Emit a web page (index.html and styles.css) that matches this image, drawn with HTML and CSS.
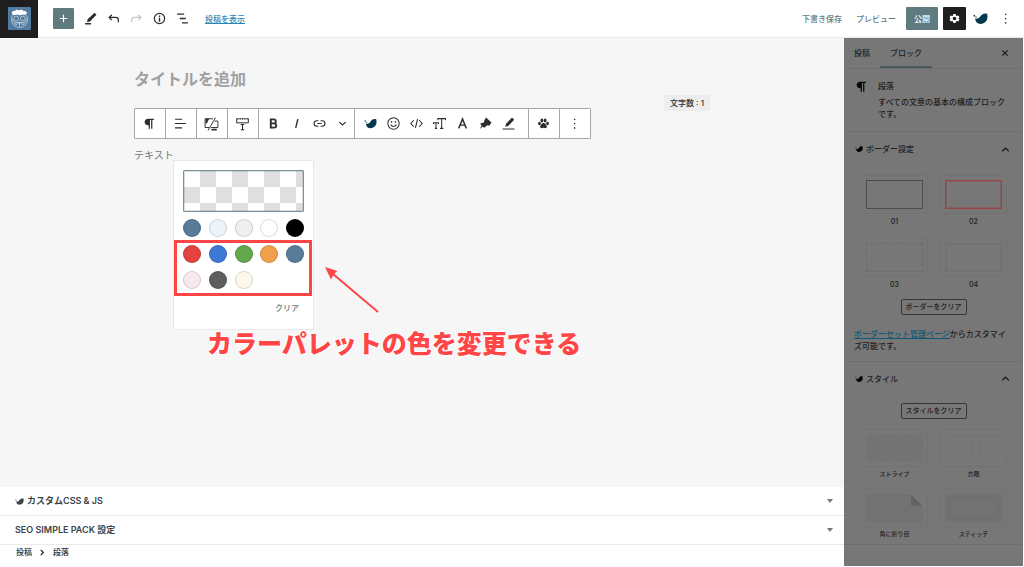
FILE: index.html
```html
<!DOCTYPE html>
<html lang="ja">
<head>
<meta charset="utf-8">
<title>投稿を編集</title>
<link rel="stylesheet" href="styles.css">
</head>
<body>
<svg class="defs" aria-hidden="true">
  <symbol id="swell" viewBox="0 0 16 16"><path d="M2.200 8C4 8.800 6.500 8 8.200 5.400 10 2.800 12.500 2.200 15 2.800c1.600 5.800-1.200 11-7 11C4.800 13.800 2.500 11.800 2.200 8z"/><circle cx="1.400" cy="5" r=".9"/><circle cx="3.200" cy="6.400" r=".7"/></symbol>
  <symbol id="para" viewBox="0 0 24 24"><path d="M20 3H9.500C5.500 3 3 5.800 3 9s2.500 6 6.500 6h1v6.500h2.300V5.500h2.200v16h2.300V5.500H20z"/></symbol>
  <symbol id="up" viewBox="0 0 24 24"><path d="M3 16.500l9-8 9 8" fill="none" stroke="currentColor" stroke-width="3.500"/></symbol>
  <symbol id="dots" viewBox="0 0 24 24"><path d="M11 3h2.500v2.500H11zM11 11h2.500v2.500H11zM11 19h2.500v2.500H11z"/></symbol>
</svg>
<header class="topbar">
  <a class="site" href="#" aria-label="サイト">
    <svg viewBox="0 0 23 23"><rect width="23" height="23" rx="1" fill="#517b9f"/><g fill="none" stroke="#c7d5df" stroke-width=".8"><circle cx="11.500" cy="12.500" r="8"/><circle cx="8.200" cy="11.500" r="2.400"/><circle cx="14.800" cy="11.500" r="2.400"/><path d="M4 12l4 6 3.500-3 3.500 3 4-6M7 15.500h9M11.500 15v5"/></g><path d="M4 6.500c-.5-2 1.500-3 3-2.500 1-1.500 3-1.500 4-.5 1.500-1.200 3.500-1 4.500.5 2-.5 3.800.8 3.200 2.500-1 1.700-3 1.500-4 1-2 1-4 .8-5 0-2 .8-5 .8-5.700-1z" fill="#fff"/></svg>
  </a>
  <button class="add" aria-label="ブロックを追加"><svg viewBox="0 0 24 24"><path d="M12 4v16M4 12h16" stroke="currentColor" stroke-width="2.500"/></svg></button>
  <div class="tools">
    <button class="ib" aria-label="編集"><svg viewBox="0 0 24 24"><path d="M19.500 1.500l3.500 3.500L11 17.500 5.500 19l1.300-5.500zM2 20.500h11v2.500H2z"/></svg></button>
    <button class="ib" aria-label="元に戻す"><svg viewBox="0 0 24 24"><path d="M9 5l-5 5 5 5M4.500 10H16q5 0 5 5v4" fill="none" stroke="currentColor" stroke-width="2.300"/></svg></button>
    <button class="ib off" aria-label="やり直す"><svg viewBox="0 0 24 24"><path d="M15 5l5 5-5 5M19.500 10H8q-5 0-5 5v4" fill="none" stroke="currentColor" stroke-width="2.300"/></svg></button>
    <button class="ib" aria-label="詳細"><svg viewBox="0 0 24 24"><circle cx="12" cy="12" r="9.500" fill="none" stroke="currentColor" stroke-width="2.200"/><path d="M10.700 6.500h2.600v2.600h-2.600zM10.700 10.800h2.600v7h-2.600z"/></svg></button>
    <button class="ib" aria-label="アウトライン"><svg viewBox="0 0 24 24"><path d="M2 4h13M7 12h11M11 20h11" stroke="currentColor" stroke-width="2.500"/></svg></button>
  </div>
  <a class="view" href="#">投稿を表示</a>
  <div class="actions">
    <button class="text">下書き保存</button>
    <button class="text">プレビュー</button>
    <button class="publish">公開</button>
    <button class="gear" aria-label="設定"><svg viewBox="0 0 24 24"><path fill-rule="evenodd" d="M9.500 2h5l.7 3.200 2 1.200 3.100-1 2.500 4.300-2.400 2.300 2.400 2.300-2.500 4.300-3.100-1-2 1.200-.7 3.200h-5l-.7-3.200-2-1.200-3.100 1-2.500-4.300L3.600 12 1.200 9.700l2.500-4.300 3.100 1 2-1.200zM12 8a4 4 0 100 8 4 4 0 000-8z"/></svg></button>
    <button class="ib swell" aria-label="SWELL設定"><svg><use href="#swell"/></svg></button>
    <button class="ib more" aria-label="オプション"><svg><use href="#dots"/></svg></button>
  </div>
</header>
<div class="workspace">
  <main class="editor">
    <section class="canvas">
      <h1 class="title">タイトルを追加</h1>
      <span class="count">文字数 : 1</span>
      <div class="toolbar" role="toolbar" aria-label="ブロックツール">
        <div class="group single"><button class="ib" aria-label="段落"><svg><use href="#para"/></svg></button></div>
        <div class="group single"><button class="ib" aria-label="配置"><svg viewBox="0 0 24 24"><path d="M2 4h13M2 12h20M2 20h13" stroke="currentColor" stroke-width="2"/></svg></button></div>
        <div class="group single"><button class="ib wide" aria-label="デバイス制限"><svg viewBox="0 0 24 24"><g fill="none" stroke="currentColor" stroke-width="1.600"><path d="M8 18H1V3h14M17 7h6v11H11M19 1L6 23"/></g><path d="M2 3h6L4 11H2zM12 20h9v3h-9z"/></svg></button></div>
        <div class="group single"><button class="ib wide" aria-label="余白"><svg viewBox="0 0 24 24"><g fill="none" stroke="currentColor"><path d="M2 3v7h20V3" stroke-width="1.700"/><path d="M2 3h20" stroke-width="2.200" stroke-dasharray="2 1"/><path d="M12 13v9M9 13h6M9 22h6" stroke-width="1.800"/></g></svg></button></div>
        <div class="group format">
          <button class="ib" aria-label="太字"><svg viewBox="0 0 24 24"><path d="M7 4.500h5.500q3.700 0 3.700 3.600T12.500 11.700H7h6q4 0 4 3.900T13 19.500H7z" fill="none" stroke="currentColor" stroke-width="3.400"/></svg></button>
          <button class="ib" aria-label="斜体"><svg viewBox="0 0 24 24"><path d="M14.500 4l-4 16" stroke="currentColor" stroke-width="2.600"/></svg></button>
          <button class="ib" aria-label="リンク"><svg viewBox="0 0 24 24"><path d="M10 7H7a5 5 0 000 10h3M14 7h3a5 5 0 010 10h-3M8 12h8" fill="none" stroke="currentColor" stroke-width="2"/></svg></button>
          <button class="ib" aria-label="さらに表示"><svg viewBox="0 0 24 24"><path d="M6 9.500l6 5 6-5" fill="none" stroke="currentColor" stroke-width="2.300"/></svg></button>
        </div>
        <div class="group extra">
          <button class="ib navy" aria-label="SWELL装飾"><svg><use href="#swell"/></svg></button>
          <button class="ib" aria-label="絵文字"><svg viewBox="0 0 24 24"><g fill="none" stroke="currentColor" stroke-width="1.900"><circle cx="12" cy="12" r="10.500"/><path d="M6.500 14q5.500 7 11 0"/></g><circle cx="8.500" cy="9" r="1.500"/><circle cx="15.500" cy="9" r="1.500"/></svg></button>
          <button class="ib" aria-label="コード"><svg viewBox="0 0 24 24"><path d="M7 6l-5.500 6L7 18M17 6l5.500 6-5.500 6M14 4l-4 16" fill="none" stroke="currentColor" stroke-width="2"/></svg></button>
          <button class="ib" aria-label="文字サイズ"><svg viewBox="0 0 24 24"><path d="M9 6V3h14v3M16 3v18M13 21h6M1 13v-2.500h9V13M5.500 10.500V21M3.500 21h4" fill="none" stroke="currentColor" stroke-width="1.900"/></svg></button>
          <button class="ib" aria-label="文字色"><svg viewBox="0 0 24 24"><path d="M5 21l7-17.500L19 21M7.500 15h9" fill="none" stroke="currentColor" stroke-width="2.700"/></svg></button>
          <button class="ib" aria-label="背景色"><svg viewBox="0 0 24 24"><path d="M13 1l10 9-4 6-4-1-5 5-3-2-6 4 4-6-3-4 7-2 1-4z"/></svg></button>
          <button class="ib" aria-label="マーカー"><svg viewBox="0 0 24 24"><path d="M18.500 1l4 4L11.500 16.500 6 18l1.500-5.500zM1 21h22v2H1z"/></svg></button>
        </div>
        <div class="group single"><button class="ib" aria-label="装飾"><svg viewBox="0 0 24 24"><ellipse cx="4.500" cy="12" rx="2.600" ry="3.200"/><ellipse cx="9" cy="6.500" rx="2.600" ry="3.600"/><ellipse cx="15" cy="6.500" rx="2.600" ry="3.600"/><ellipse cx="19.500" cy="12" rx="2.600" ry="3.200"/><path d="M12 11c3 0 7 5 6 8s-4 1-6 1-5 2-6-1 3-8 6-8z"/></svg></button></div>
        <div class="group single"><button class="ib" aria-label="オプション"><svg><use href="#dots"/></svg></button></div>
      </div>
      <div class="block">
        <p class="para">テキスト</p>
        <div class="popover">
          <button class="preview" aria-label="カスタムカラー"></button>
          <div class="swatches">
            <button class="sw c1" aria-label="メインカラー"></button><button class="sw c2" aria-label="淡い青"></button><button class="sw c3" aria-label="グレー"></button><button class="sw c4" aria-label="白"></button><button class="sw c5" aria-label="黒"></button>
            <button class="sw c6" aria-label="赤"></button><button class="sw c7" aria-label="青"></button><button class="sw c8" aria-label="緑"></button><button class="sw c9" aria-label="オレンジ"></button><button class="sw c1" aria-label="カスタム青"></button>
            <button class="sw c10" aria-label="ピンク"></button><button class="sw c11" aria-label="濃いグレー"></button><button class="sw c12" aria-label="クリーム"></button>
          </div>
          <button class="clear">クリア</button>
          <div class="frame"></div>
          <svg class="arrow" viewBox="0 0 56 48"><path d="M54 46L9 8" stroke="#ff4545" stroke-width="2"/><path d="M1 1l12.500 4-4 3.500L7 13.500z" fill="#ff4545"/></svg>
          <p class="callout">カラーパレットの色を変更できる</p>
        </div>
      </div>
    </section>
    <button class="metabox"><svg class="leaf"><use href="#swell"/></svg><span>カスタムCSS &amp; JS</span><i class="tri"></i></button>
    <button class="metabox"><span>SEO SIMPLE PACK 設定</span><i class="tri"></i></button>
    <nav class="crumbs" aria-label="パンくず"><a href="#">投稿</a><svg viewBox="0 0 8 8"><path d="M2 1l3 3-3 3" fill="none" stroke="currentColor" stroke-width="1.500"/></svg><a href="#">段落</a></nav>
  </main>
  <aside class="sidebar">
    <div class="tabs"><button>投稿</button><button class="on">ブロック</button><button class="close" aria-label="閉じる"><svg viewBox="0 0 12 12"><path d="M2 2l8 8M10 2l-8 8" stroke="currentColor" stroke-width="1.900"/></svg></button></div>
    <div class="info"><svg><use href="#para"/></svg><div><h2>段落</h2><p>すべての文章の基本の構成ブロックです。</p></div></div>
    <section class="panel">
      <button class="head"><svg class="leaf"><use href="#swell"/></svg><span>ボーダー設定</span><svg class="chev"><use href="#up"/></svg></button>
      <div class="cards">
        <button class="item"><span class="card"><i class="b1"></i></span>01</button>
        <button class="item"><span class="card"><i class="b2"></i></span>02</button>
        <button class="item"><span class="card"><i class="b3"></i></span>03</button>
        <button class="item"><span class="card"><i class="b4"></i></span>04</button>
      </div>
      <button class="reset">ボーダーをクリア</button>
      <p class="note"><a href="#">ボーダーセット管理ページ</a>からカスタマイズ可能です。</p>
    </section>
    <section class="panel styles">
      <button class="head"><svg class="leaf"><use href="#swell"/></svg><span>スタイル</span><svg class="chev"><use href="#up"/></svg></button>
      <button class="reset">スタイルをクリア</button>
      <div class="cards small">
        <button class="item"><span class="card"><i class="s1"></i></span>ストライプ</button>
        <button class="item"><span class="card"><i class="s2"></i></span>方眼</button>
        <button class="item"><span class="card"><i class="s3"></i></span>角に折り目</button>
        <button class="item"><span class="card"><i class="s4"></i></span>スティッチ</button>
      </div>
    </section>
  </aside>
</div>
</body>
</html>
```
FILE: styles.css
```css
* { box-sizing: border-box; }
body { margin: 0; min-height: 100vh; display: flex; flex-direction: column; background: #fff; color: #2c2c2c; font: 500 8px/12px Inter, "Noto Sans CJK JP", sans-serif; }
button { margin: 0; padding: 0; border: 0; background: none; color: inherit; font: inherit; cursor: pointer; }
h1, h2, p { margin: 0; }
svg { display: block; fill: currentColor; }
.defs { position: absolute; width: 0; height: 0; }
.ib { width: 23px; height: 23px; display: flex; align-items: center; justify-content: center; flex: none; }
.ib svg { width: 13px; height: 13px; }
.ib.wide svg { width: 15px; height: 14px; }

.topbar { display: flex; align-items: center; height: 38px; border-bottom: 1px solid #e8e8e8; }
.site { width: 38px; height: 38px; background: #1e1e1e; display: flex; align-items: center; justify-content: center; }
.site svg { width: 23px; height: 23px; }
.add { width: 21px; height: 21px; margin-left: 15px; border-radius: 1px; background: #5f7b80; color: #fff; display: flex; align-items: center; justify-content: center; }
.add svg { width: 11px; height: 11px; }
.tools { display: flex; margin-left: 5px; }
.tools .off { color: #c4c4c4; }
.view { margin-left: 11px; color: #2586b5; text-decoration: underline; }
.actions { margin-left: auto; display: flex; align-items: center; padding-right: 7px; }
.text { color: #5f7b80; margin-right: 14px; }
.text + .text { margin-right: 10px; }
.publish { width: 32px; height: 23px; border-radius: 1px; background: #5f7b80; color: #fff; margin-right: 5px; }
.gear { width: 23px; height: 23px; border-radius: 1px; background: #1e1e1e; color: #fff; display: flex; align-items: center; justify-content: center; margin-right: 3px; }
.gear svg { width: 11px; height: 11px; }
.swell { color: #04384c; margin-right: 2px; }
.swell svg { width: 15px; height: 15px; }
.navy { color: #04384c; }

.workspace { flex: 1; display: flex; }
.editor { flex: 1; min-width: 0; display: flex; flex-direction: column; }
.canvas { flex: 1; position: relative; background: #f6f6f6; padding: 29px 134px 0; }
.title { color: #a0a0a0; font-size: 16px; line-height: 24px; font-weight: 700; }
.count { position: absolute; top: 57px; right: 134px; padding: 2px 6px; background: #ededed; }
.toolbar { display: flex; width: max-content; height: 31px; margin-top: 17px; background: #fff; border: 1px solid #a6a6a6; border-radius: 1px; }
.group { display: flex; align-items: center; }
.group + .group { border-left: 1px solid #a6a6a6; }
.single { padding: 0 4px 0 3px; }
.format { padding: 0 0 0 3px; }
.extra { padding: 0 8px 0 4px; }
.block { position: relative; padding-top: 9px; }
.para { font-size: 10px; line-height: 14px; font-weight: 400; color: #777; }

.popover { position: absolute; left: 39px; top: 21px; width: 141px; height: 170px; padding: 9px; background: #fff; border: 1px solid #e8e8e8; display: flex; flex-direction: column; }
.preview { height: 42px; border: 1px solid #78919a; outline: 1px solid rgb(120 145 154 / 30%); outline-offset: -2px; border-radius: 1px; background: conic-gradient(#dfdfdf 25%, #fff 0 50%, #dfdfdf 0 75%, #fff 0) 0 0 / 32px 32px; }
.swatches { display: grid; grid-template-columns: repeat(5, 18px); justify-content: space-between; row-gap: 8px; margin-top: 7px; }
.sw { height: 18px; border-radius: 50%; border: 1px solid rgb(0 0 0 / 14%); }
.c1 { background: #587b9a; } .c2 { background: #edf4f9; } .c3 { background: #efefef; } .c4 { background: #fff; } .c5 { background: #000; }
.c6 { background: #e44141; } .c7 { background: #3d79d5; } .c8 { background: #63a84d; } .c9 { background: #f09f4d; }
.c10 { background: #f7e9ed; } .c11 { background: #5c5e60; } .c12 { background: #fdf8eb; }
.clear { align-self: flex-end; margin: 13px 5px 0 0; color: #5f7b80; }
.frame { position: absolute; left: 0; right: 1px; top: 79px; height: 56px; border: 3px solid #ff4545; }
.arrow { position: absolute; left: 150px; top: 105px; width: 56px; height: 48px; }
.callout { position: absolute; left: 33px; top: 165px; font-size: 25px; line-height: 36px; font-weight: 900; white-space: nowrap; color: #ff4545; text-shadow: 0 0 2px #fff, 0 0 2px #fff, 1px 1px 1px #fff, -1px -1px 1px #fff; }

.metabox { display: flex; align-items: center; height: 29px; padding: 0 11px 0 15px; border-bottom: 1px solid #eaeaea; font-size: 9px; font-weight: 600; text-align: left; color: #3c434a; }
.leaf { width: 9px; height: 9px; margin-right: 3px; }
.tri { margin-left: auto; border: 3px solid transparent; border-top: 4px solid #72777c; border-bottom: 0; }
.crumbs { display: flex; align-items: center; padding: 1px 16px 9px; }
.crumbs a { color: inherit; text-decoration: none; }
.crumbs svg { width: 7px; height: 7px; margin: 0 7px; }

.sidebar { width: 179px; margin: 0 1px 1px 0; background: #777; color: #1e1e1e; }
.tabs { display: flex; height: 31px; border-bottom: 1px solid #6e6e6e; }
.tabs button { padding: 0 10px; }
.tabs .on { border-bottom: 2px solid #46585d; padding-top: 2px; }
.tabs .close { margin-left: auto; padding-right: 14px; }
.close svg { width: 8px; height: 8px; }
.info { display: flex; padding: 11px 13px 11px 11px; gap: 10px; border-bottom: 1px solid #6e6e6e; }
.info > svg { width: 13px; height: 13px; flex: none; color: #080808; }
.info h2 { font-size: 8px; line-height: 12px; font-weight: 500; margin-bottom: 4px; }
.panel { display: flex; flex-direction: column; padding-bottom: 9px; border-bottom: 1px solid #6e6e6e; }
.head { display: flex; align-items: center; height: 34px; padding: 0 13px 0 11px; }
.head .leaf { width: 8px; height: 8px; margin-right: 3px; color: #000; }
.chev { width: 9px; height: 9px; margin-left: auto; }
.cards { display: grid; grid-template-columns: 1fr 1fr; gap: 8px 12px; padding: 9px 16px 0 17px; }
.item { font-size: 7px; line-height: 16px; text-align: center; }
.card { display: flex; height: 39px; padding: 4px; border: 1px solid #727272; border-radius: 2px; }
.card i { flex: 1; }
.b1 { border: 1px solid #4c4c4c; }
.b2 { border: 1px solid #9c4346; outline: 1px solid #85605f; outline-offset: -2px; }
.b3 { border: 1px dashed #6b6b6b; }
.b4 { border: 2px solid #727272; }
.reset { align-self: center; height: 16px; padding: 0 4px; margin-top: 6px; border: 1px solid #353535; border-radius: 2px; font-size: 7px; line-height: 14px; }
.note { padding: 13px 10px 0; }
.note a { color: #105877; text-decoration: underline; }
.small { padding-top: 10px; }
.small .item { font-size: 6px; line-height: 14px; }
.small .card { height: 38px; }
.styles { padding-bottom: 3px; }
.styles .head { height: 33px; }
.styles .reset { margin-top: 8px; }
.s1 { background: repeating-linear-gradient(135deg, #727272 0 2px, #757575 2px 4px); }
.s2 { background: repeating-linear-gradient(90deg, transparent 0 8px, #727272 8px 9px), repeating-linear-gradient(0deg, transparent 0 8px, #727272 8px 9px); }
.s3 { background: linear-gradient(45deg, #636363 50%, #777 50%) right top / 12px 12px no-repeat, #727272; }
.s4 { background: #727272; outline: 1px dashed #696969; outline-offset: -4px; }
```
